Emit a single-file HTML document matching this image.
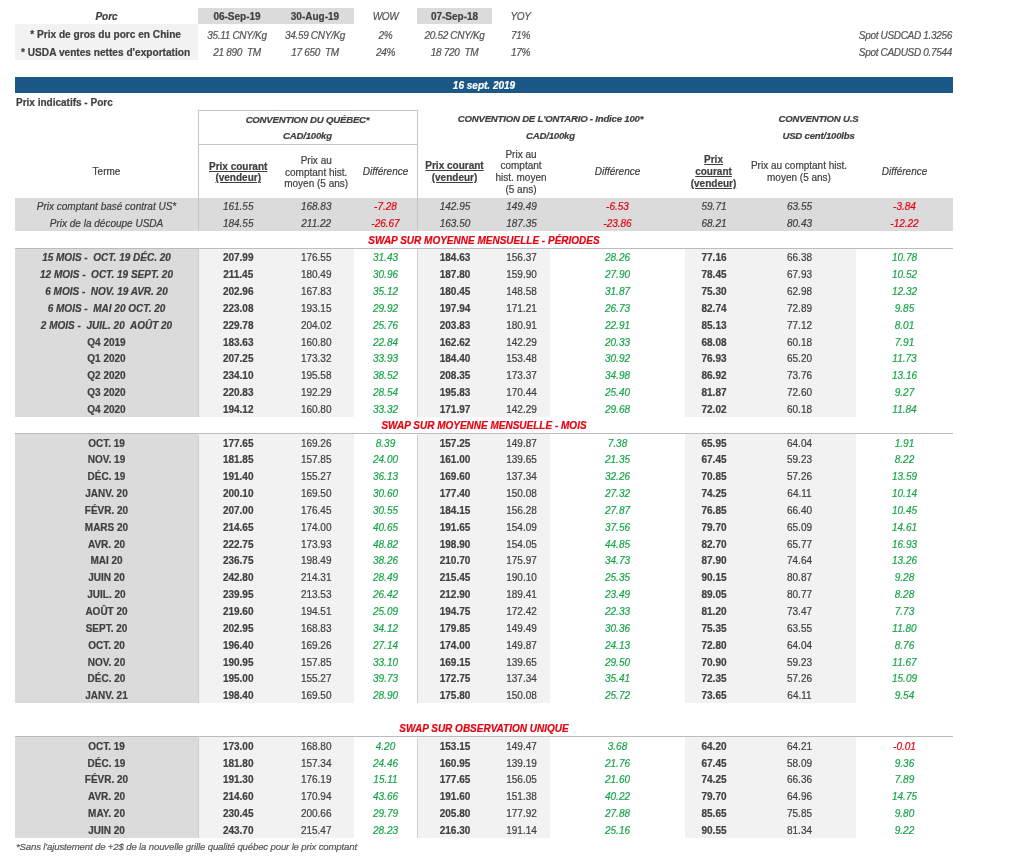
<!DOCTYPE html>
<html><head><meta charset="utf-8"><style>
html,body{margin:0;padding:0;background:#fff;width:1024px;height:857px;overflow:hidden}
body{position:relative;-webkit-text-stroke:0.2px;font-family:"Liberation Sans",sans-serif;color:#404040;font-size:10.0px}
.r,.vd,.hd,.t,.m{position:absolute}
.vd{width:0}
.hd{height:0}
.t{height:20px;line-height:20px;white-space:nowrap}
.m{text-align:center;white-space:nowrap}
.b{font-weight:bold}
.i{font-style:italic}
.bi{font-weight:bold;font-style:italic}
.u{text-decoration:underline}
</style></head><body><div style="position:absolute;left:0;top:0;width:1024px;height:857px;will-change:transform">
<div class="r" style="left:198px;top:7.60px;width:156px;height:16.60px;background:#dbdbdb"></div>
<div class="r" style="left:417px;top:7.60px;width:75px;height:16.60px;background:#dbdbdb"></div>
<div class="r" style="left:15px;top:24.20px;width:183px;height:35.50px;background:#f2f2f2"></div>
<div class="t bi" style="left:15px;width:183px;top:6.80px;text-align:center;">Porc</div>
<div class="t b" style="left:198px;width:78px;top:6.90px;text-align:center;">06-Sep-19</div>
<div class="t b" style="left:276px;width:78px;top:6.90px;text-align:center;">30-Aug-19</div>
<div class="t i" style="left:354px;width:63px;top:6.80px;text-align:center;letter-spacing:-0.32px;color:#555555;font-size:10px;">WOW</div>
<div class="t b" style="left:417px;width:75px;top:6.90px;text-align:center;">07-Sep-18</div>
<div class="t i" style="left:492px;width:57px;top:6.80px;text-align:center;letter-spacing:-0.32px;color:#555555;font-size:10px;">YOY</div>
<div class="t b" style="left:13.6px;width:184.0px;top:24.70px;text-align:center;font-size:10.15px;">* Prix de gros du porc en Chine</div>
<div class="t b" style="left:13.6px;width:184.0px;top:42.50px;text-align:center;font-size:10.15px;">* USDA ventes nettes d'exportation</div>
<div class="t i" style="left:198px;width:78px;top:25.50px;text-align:center;letter-spacing:-0.32px;color:#555555;font-size:10px;">35.11 CNY/Kg</div>
<div class="t i" style="left:198px;width:78px;top:42.50px;text-align:center;letter-spacing:-0.32px;color:#555555;font-size:10px;">21 890&nbsp; TM</div>
<div class="t i" style="left:276px;width:78px;top:25.50px;text-align:center;letter-spacing:-0.32px;color:#555555;font-size:10px;">34.59 CNY/Kg</div>
<div class="t i" style="left:276px;width:78px;top:42.50px;text-align:center;letter-spacing:-0.32px;color:#555555;font-size:10px;">17 650&nbsp; TM</div>
<div class="t i" style="left:354px;width:63px;top:25.50px;text-align:center;letter-spacing:-0.32px;color:#555555;font-size:10px;">2%</div>
<div class="t i" style="left:354px;width:63px;top:42.50px;text-align:center;letter-spacing:-0.32px;color:#555555;font-size:10px;">24%</div>
<div class="t i" style="left:417px;width:75px;top:25.50px;text-align:center;letter-spacing:-0.32px;color:#555555;font-size:10px;">20.52 CNY/Kg</div>
<div class="t i" style="left:417px;width:75px;top:42.50px;text-align:center;letter-spacing:-0.32px;color:#555555;font-size:10px;">18 720&nbsp; TM</div>
<div class="t i" style="left:492px;width:57px;top:25.50px;text-align:center;letter-spacing:-0.32px;color:#555555;font-size:10px;">71%</div>
<div class="t i" style="left:492px;width:57px;top:42.50px;text-align:center;letter-spacing:-0.32px;color:#555555;font-size:10px;">17%</div>
<div class="t i" style="left:700px;width:252px;top:25.50px;text-align:right;letter-spacing:-0.32px;color:#555555;font-size:10px;">Spot USDCAD 1.3256</div>
<div class="t i" style="left:700px;width:252px;top:42.50px;text-align:right;letter-spacing:-0.32px;color:#555555;font-size:10px;">Spot CADUSD 0.7544</div>
<div class="r" style="left:15px;top:77.00px;width:938px;height:16.30px;background:#1b5787"></div>
<div class="t bi" style="left:15px;width:938px;top:76.40px;text-align:center;color:#ffffff;">16 sept. 2019</div>
<div class="t b" style="left:16px;width:384px;top:93.10px;text-align:left;">Prix indicatifs - Porc</div>
<div class="r" style="left:15px;top:197.80px;width:938px;height:33.68px;background:#dbdbdb"></div>
<div class="hd" style="left:198px;top:110.20px;width:219px;border-top:1px solid #c4c4c4"></div>
<div class="hd" style="left:198px;top:143.70px;width:219px;border-top:1px solid #c4c4c4"></div>
<div class="r" style="left:276px;top:110.20px;width:78px;height:1.00px;background:#bdbdbd"></div>
<div class="r" style="left:276px;top:143.70px;width:78px;height:1.60px;background:#c4c4c4"></div>
<div class="vd" style="left:198px;top:110.20px;height:121.10px;border-left:1px solid #c4c4c4"></div>
<div class="vd" style="left:417px;top:110.20px;height:121.10px;border-left:1px solid #c4c4c4"></div>
<div class="t bi" style="left:198px;width:219px;top:109.80px;text-align:center;letter-spacing:-0.2px;font-size:9.6px;">CONVENTION DU QUÉBEC*</div>
<div class="t bi" style="left:198px;width:219px;top:126.10px;text-align:center;letter-spacing:-0.2px;font-size:9.6px;">CAD/100kg</div>
<div class="t bi" style="left:417px;width:267px;top:109.40px;text-align:center;letter-spacing:-0.2px;font-size:9.6px;">CONVENTION DE L'ONTARIO - Indice 100*</div>
<div class="t bi" style="left:417px;width:267px;top:125.90px;text-align:center;letter-spacing:-0.2px;font-size:9.6px;">CAD/100kg</div>
<div class="t bi" style="left:684px;width:269px;top:109.40px;text-align:center;letter-spacing:-0.2px;font-size:9.6px;">CONVENTION U.S</div>
<div class="t bi" style="left:684px;width:269px;top:125.90px;text-align:center;letter-spacing:-0.2px;font-size:9.6px;">USD cent/100lbs</div>
<div class="t " style="left:15px;width:183px;top:162.10px;text-align:center;">Terme</div>
<div class="m b u" style="left:199.2px;width:78.0px;top:160.70px;line-height:11.7px;">Prix courant<br>(vendeur)</div>
<div class="m " style="left:277.2px;width:78.0px;top:154.85px;line-height:11.7px;">Prix au<br>comptant hist.<br>moyen (5 ans)</div>
<div class="t i" style="left:354px;width:63px;top:162.40px;text-align:center;">Différence</div>
<div class="m b u" style="left:417px;width:75px;top:160.20px;line-height:11.7px;">Prix courant<br>(vendeur)</div>
<div class="m " style="left:492px;width:58px;top:148.50px;line-height:11.7px;">Prix au<br>comptant<br>hist. moyen<br>(5 ans)</div>
<div class="t i" style="left:550px;width:135px;top:161.90px;text-align:center;">Différence</div>
<div class="m b u" style="left:685px;width:57px;top:154.35px;line-height:11.7px;">Prix<br>courant<br>(vendeur)</div>
<div class="m " style="left:742px;width:114px;top:160.20px;line-height:11.7px;">Prix au comptant hist.<br>moyen (5 ans)</div>
<div class="t i" style="left:856px;width:97px;top:161.90px;text-align:center;">Différence</div>
<div class="t i" style="left:15px;width:183px;top:197.22px;text-align:center;">Prix comptant basé contrat US*</div>
<div class="t i" style="left:199.2px;width:78.0px;top:197.22px;text-align:center;">161.55</div>
<div class="t i" style="left:277.2px;width:78.0px;top:197.22px;text-align:center;">168.83</div>
<div class="t i" style="left:354px;width:63px;top:197.22px;text-align:center;color:#e30613;">-7.28</div>
<div class="t i" style="left:417.5px;width:75.0px;top:197.22px;text-align:center;">142.95</div>
<div class="t i" style="left:492.5px;width:58.0px;top:197.22px;text-align:center;">149.49</div>
<div class="t i" style="left:550px;width:135px;top:197.22px;text-align:center;color:#e30613;">-6.53</div>
<div class="t i" style="left:685.5px;width:57.0px;top:197.22px;text-align:center;">59.71</div>
<div class="t i" style="left:742.5px;width:114.0px;top:197.22px;text-align:center;">63.55</div>
<div class="t i" style="left:856px;width:97px;top:197.22px;text-align:center;color:#e30613;">-3.84</div>
<div class="t i" style="left:15px;width:183px;top:214.06px;text-align:center;">Prix de la découpe USDA</div>
<div class="t i" style="left:199.2px;width:78.0px;top:214.06px;text-align:center;">184.55</div>
<div class="t i" style="left:277.2px;width:78.0px;top:214.06px;text-align:center;">211.22</div>
<div class="t i" style="left:354px;width:63px;top:214.06px;text-align:center;color:#e30613;">-26.67</div>
<div class="t i" style="left:417.5px;width:75.0px;top:214.06px;text-align:center;">163.50</div>
<div class="t i" style="left:492.5px;width:58.0px;top:214.06px;text-align:center;">187.35</div>
<div class="t i" style="left:550px;width:135px;top:214.06px;text-align:center;color:#e30613;">-23.86</div>
<div class="t i" style="left:685.5px;width:57.0px;top:214.06px;text-align:center;">68.21</div>
<div class="t i" style="left:742.5px;width:114.0px;top:214.06px;text-align:center;">80.43</div>
<div class="t i" style="left:856px;width:97px;top:214.06px;text-align:center;color:#e30613;">-12.22</div>
<div class="t bi" style="left:15px;width:938px;top:230.50px;text-align:center;color:#e30613;">SWAP SUR MOYENNE MENSUELLE - PÉRIODES</div>
<div class="r" style="left:15px;top:248.32px;width:183px;height:168.40px;background:#dbdbdb"></div>
<div class="r" style="left:198px;top:248.32px;width:156px;height:168.40px;background:#f2f2f2"></div>
<div class="r" style="left:417px;top:248.32px;width:133px;height:168.40px;background:#f2f2f2"></div>
<div class="r" style="left:685px;top:248.32px;width:171px;height:168.40px;background:#f2f2f2"></div>
<div class="r" style="left:15px;top:247.82px;width:938px;height:1.20px;background:#bcbcbc"></div>
<div class="vd" style="left:198px;top:249.32px;height:167.40px;border-left:1px solid #cdcdcd"></div>
<div class="vd" style="left:417px;top:249.32px;height:167.40px;border-left:1px solid #cdcdcd"></div>
<div class="t bi" style="left:15px;width:183px;top:248.34px;text-align:center;">15 MOIS -&nbsp; OCT. 19 DÉC. 20</div>
<div class="t b" style="left:199.2px;width:78.0px;top:248.34px;text-align:center;">207.99</div>
<div class="t " style="left:277.2px;width:78.0px;top:248.34px;text-align:center;">176.55</div>
<div class="t i" style="left:354px;width:63px;top:248.34px;text-align:center;color:#1aa64a;">31.43</div>
<div class="t b" style="left:417.5px;width:75.0px;top:248.34px;text-align:center;">184.63</div>
<div class="t " style="left:492.5px;width:58.0px;top:248.34px;text-align:center;">156.37</div>
<div class="t i" style="left:550px;width:135px;top:248.34px;text-align:center;color:#1aa64a;">28.26</div>
<div class="t b" style="left:685.5px;width:57.0px;top:248.34px;text-align:center;">77.16</div>
<div class="t " style="left:742.5px;width:114.0px;top:248.34px;text-align:center;">66.38</div>
<div class="t i" style="left:856px;width:97px;top:248.34px;text-align:center;color:#1aa64a;">10.78</div>
<div class="t bi" style="left:15px;width:183px;top:265.18px;text-align:center;">12 MOIS -&nbsp; OCT. 19 SEPT. 20</div>
<div class="t b" style="left:199.2px;width:78.0px;top:265.18px;text-align:center;">211.45</div>
<div class="t " style="left:277.2px;width:78.0px;top:265.18px;text-align:center;">180.49</div>
<div class="t i" style="left:354px;width:63px;top:265.18px;text-align:center;color:#1aa64a;">30.96</div>
<div class="t b" style="left:417.5px;width:75.0px;top:265.18px;text-align:center;">187.80</div>
<div class="t " style="left:492.5px;width:58.0px;top:265.18px;text-align:center;">159.90</div>
<div class="t i" style="left:550px;width:135px;top:265.18px;text-align:center;color:#1aa64a;">27.90</div>
<div class="t b" style="left:685.5px;width:57.0px;top:265.18px;text-align:center;">78.45</div>
<div class="t " style="left:742.5px;width:114.0px;top:265.18px;text-align:center;">67.93</div>
<div class="t i" style="left:856px;width:97px;top:265.18px;text-align:center;color:#1aa64a;">10.52</div>
<div class="t bi" style="left:15px;width:183px;top:282.02px;text-align:center;">6 MOIS -&nbsp; NOV. 19 AVR. 20</div>
<div class="t b" style="left:199.2px;width:78.0px;top:282.02px;text-align:center;">202.96</div>
<div class="t " style="left:277.2px;width:78.0px;top:282.02px;text-align:center;">167.83</div>
<div class="t i" style="left:354px;width:63px;top:282.02px;text-align:center;color:#1aa64a;">35.12</div>
<div class="t b" style="left:417.5px;width:75.0px;top:282.02px;text-align:center;">180.45</div>
<div class="t " style="left:492.5px;width:58.0px;top:282.02px;text-align:center;">148.58</div>
<div class="t i" style="left:550px;width:135px;top:282.02px;text-align:center;color:#1aa64a;">31.87</div>
<div class="t b" style="left:685.5px;width:57.0px;top:282.02px;text-align:center;">75.30</div>
<div class="t " style="left:742.5px;width:114.0px;top:282.02px;text-align:center;">62.98</div>
<div class="t i" style="left:856px;width:97px;top:282.02px;text-align:center;color:#1aa64a;">12.32</div>
<div class="t bi" style="left:15px;width:183px;top:298.86px;text-align:center;">6 MOIS -&nbsp; MAI 20 OCT. 20</div>
<div class="t b" style="left:199.2px;width:78.0px;top:298.86px;text-align:center;">223.08</div>
<div class="t " style="left:277.2px;width:78.0px;top:298.86px;text-align:center;">193.15</div>
<div class="t i" style="left:354px;width:63px;top:298.86px;text-align:center;color:#1aa64a;">29.92</div>
<div class="t b" style="left:417.5px;width:75.0px;top:298.86px;text-align:center;">197.94</div>
<div class="t " style="left:492.5px;width:58.0px;top:298.86px;text-align:center;">171.21</div>
<div class="t i" style="left:550px;width:135px;top:298.86px;text-align:center;color:#1aa64a;">26.73</div>
<div class="t b" style="left:685.5px;width:57.0px;top:298.86px;text-align:center;">82.74</div>
<div class="t " style="left:742.5px;width:114.0px;top:298.86px;text-align:center;">72.89</div>
<div class="t i" style="left:856px;width:97px;top:298.86px;text-align:center;color:#1aa64a;">9.85</div>
<div class="t bi" style="left:15px;width:183px;top:315.70px;text-align:center;">2 MOIS -&nbsp; JUIL. 20&nbsp; AOÛT 20</div>
<div class="t b" style="left:199.2px;width:78.0px;top:315.70px;text-align:center;">229.78</div>
<div class="t " style="left:277.2px;width:78.0px;top:315.70px;text-align:center;">204.02</div>
<div class="t i" style="left:354px;width:63px;top:315.70px;text-align:center;color:#1aa64a;">25.76</div>
<div class="t b" style="left:417.5px;width:75.0px;top:315.70px;text-align:center;">203.83</div>
<div class="t " style="left:492.5px;width:58.0px;top:315.70px;text-align:center;">180.91</div>
<div class="t i" style="left:550px;width:135px;top:315.70px;text-align:center;color:#1aa64a;">22.91</div>
<div class="t b" style="left:685.5px;width:57.0px;top:315.70px;text-align:center;">85.13</div>
<div class="t " style="left:742.5px;width:114.0px;top:315.70px;text-align:center;">77.12</div>
<div class="t i" style="left:856px;width:97px;top:315.70px;text-align:center;color:#1aa64a;">8.01</div>
<div class="t b" style="left:15px;width:183px;top:332.54px;text-align:center;">Q4 2019</div>
<div class="t b" style="left:199.2px;width:78.0px;top:332.54px;text-align:center;">183.63</div>
<div class="t " style="left:277.2px;width:78.0px;top:332.54px;text-align:center;">160.80</div>
<div class="t i" style="left:354px;width:63px;top:332.54px;text-align:center;color:#1aa64a;">22.84</div>
<div class="t b" style="left:417.5px;width:75.0px;top:332.54px;text-align:center;">162.62</div>
<div class="t " style="left:492.5px;width:58.0px;top:332.54px;text-align:center;">142.29</div>
<div class="t i" style="left:550px;width:135px;top:332.54px;text-align:center;color:#1aa64a;">20.33</div>
<div class="t b" style="left:685.5px;width:57.0px;top:332.54px;text-align:center;">68.08</div>
<div class="t " style="left:742.5px;width:114.0px;top:332.54px;text-align:center;">60.18</div>
<div class="t i" style="left:856px;width:97px;top:332.54px;text-align:center;color:#1aa64a;">7.91</div>
<div class="t b" style="left:15px;width:183px;top:349.38px;text-align:center;">Q1 2020</div>
<div class="t b" style="left:199.2px;width:78.0px;top:349.38px;text-align:center;">207.25</div>
<div class="t " style="left:277.2px;width:78.0px;top:349.38px;text-align:center;">173.32</div>
<div class="t i" style="left:354px;width:63px;top:349.38px;text-align:center;color:#1aa64a;">33.93</div>
<div class="t b" style="left:417.5px;width:75.0px;top:349.38px;text-align:center;">184.40</div>
<div class="t " style="left:492.5px;width:58.0px;top:349.38px;text-align:center;">153.48</div>
<div class="t i" style="left:550px;width:135px;top:349.38px;text-align:center;color:#1aa64a;">30.92</div>
<div class="t b" style="left:685.5px;width:57.0px;top:349.38px;text-align:center;">76.93</div>
<div class="t " style="left:742.5px;width:114.0px;top:349.38px;text-align:center;">65.20</div>
<div class="t i" style="left:856px;width:97px;top:349.38px;text-align:center;color:#1aa64a;">11.73</div>
<div class="t b" style="left:15px;width:183px;top:366.22px;text-align:center;">Q2 2020</div>
<div class="t b" style="left:199.2px;width:78.0px;top:366.22px;text-align:center;">234.10</div>
<div class="t " style="left:277.2px;width:78.0px;top:366.22px;text-align:center;">195.58</div>
<div class="t i" style="left:354px;width:63px;top:366.22px;text-align:center;color:#1aa64a;">38.52</div>
<div class="t b" style="left:417.5px;width:75.0px;top:366.22px;text-align:center;">208.35</div>
<div class="t " style="left:492.5px;width:58.0px;top:366.22px;text-align:center;">173.37</div>
<div class="t i" style="left:550px;width:135px;top:366.22px;text-align:center;color:#1aa64a;">34.98</div>
<div class="t b" style="left:685.5px;width:57.0px;top:366.22px;text-align:center;">86.92</div>
<div class="t " style="left:742.5px;width:114.0px;top:366.22px;text-align:center;">73.76</div>
<div class="t i" style="left:856px;width:97px;top:366.22px;text-align:center;color:#1aa64a;">13.16</div>
<div class="t b" style="left:15px;width:183px;top:383.06px;text-align:center;">Q3 2020</div>
<div class="t b" style="left:199.2px;width:78.0px;top:383.06px;text-align:center;">220.83</div>
<div class="t " style="left:277.2px;width:78.0px;top:383.06px;text-align:center;">192.29</div>
<div class="t i" style="left:354px;width:63px;top:383.06px;text-align:center;color:#1aa64a;">28.54</div>
<div class="t b" style="left:417.5px;width:75.0px;top:383.06px;text-align:center;">195.83</div>
<div class="t " style="left:492.5px;width:58.0px;top:383.06px;text-align:center;">170.44</div>
<div class="t i" style="left:550px;width:135px;top:383.06px;text-align:center;color:#1aa64a;">25.40</div>
<div class="t b" style="left:685.5px;width:57.0px;top:383.06px;text-align:center;">81.87</div>
<div class="t " style="left:742.5px;width:114.0px;top:383.06px;text-align:center;">72.60</div>
<div class="t i" style="left:856px;width:97px;top:383.06px;text-align:center;color:#1aa64a;">9.27</div>
<div class="t b" style="left:15px;width:183px;top:399.90px;text-align:center;">Q4 2020</div>
<div class="t b" style="left:199.2px;width:78.0px;top:399.90px;text-align:center;">194.12</div>
<div class="t " style="left:277.2px;width:78.0px;top:399.90px;text-align:center;">160.80</div>
<div class="t i" style="left:354px;width:63px;top:399.90px;text-align:center;color:#1aa64a;">33.32</div>
<div class="t b" style="left:417.5px;width:75.0px;top:399.90px;text-align:center;">171.97</div>
<div class="t " style="left:492.5px;width:58.0px;top:399.90px;text-align:center;">142.29</div>
<div class="t i" style="left:550px;width:135px;top:399.90px;text-align:center;color:#1aa64a;">29.68</div>
<div class="t b" style="left:685.5px;width:57.0px;top:399.90px;text-align:center;">72.02</div>
<div class="t " style="left:742.5px;width:114.0px;top:399.90px;text-align:center;">60.18</div>
<div class="t i" style="left:856px;width:97px;top:399.90px;text-align:center;color:#1aa64a;">11.84</div>
<div class="t bi" style="left:15px;width:938px;top:415.74px;text-align:center;color:#e30613;">SWAP SUR MOYENNE MENSUELLE - MOIS</div>
<div class="r" style="left:15px;top:433.56px;width:183px;height:269.44px;background:#dbdbdb"></div>
<div class="r" style="left:198px;top:433.56px;width:156px;height:269.44px;background:#f2f2f2"></div>
<div class="r" style="left:417px;top:433.56px;width:133px;height:269.44px;background:#f2f2f2"></div>
<div class="r" style="left:685px;top:433.56px;width:171px;height:269.44px;background:#f2f2f2"></div>
<div class="r" style="left:15px;top:433.06px;width:938px;height:1.20px;background:#bcbcbc"></div>
<div class="vd" style="left:198px;top:434.56px;height:268.44px;border-left:1px solid #cdcdcd"></div>
<div class="vd" style="left:417px;top:434.56px;height:268.44px;border-left:1px solid #cdcdcd"></div>
<div class="t b" style="left:15px;width:183px;top:433.58px;text-align:center;">OCT. 19</div>
<div class="t b" style="left:199.2px;width:78.0px;top:433.58px;text-align:center;">177.65</div>
<div class="t " style="left:277.2px;width:78.0px;top:433.58px;text-align:center;">169.26</div>
<div class="t i" style="left:354px;width:63px;top:433.58px;text-align:center;color:#1aa64a;">8.39</div>
<div class="t b" style="left:417.5px;width:75.0px;top:433.58px;text-align:center;">157.25</div>
<div class="t " style="left:492.5px;width:58.0px;top:433.58px;text-align:center;">149.87</div>
<div class="t i" style="left:550px;width:135px;top:433.58px;text-align:center;color:#1aa64a;">7.38</div>
<div class="t b" style="left:685.5px;width:57.0px;top:433.58px;text-align:center;">65.95</div>
<div class="t " style="left:742.5px;width:114.0px;top:433.58px;text-align:center;">64.04</div>
<div class="t i" style="left:856px;width:97px;top:433.58px;text-align:center;color:#1aa64a;">1.91</div>
<div class="t b" style="left:15px;width:183px;top:450.42px;text-align:center;">NOV. 19</div>
<div class="t b" style="left:199.2px;width:78.0px;top:450.42px;text-align:center;">181.85</div>
<div class="t " style="left:277.2px;width:78.0px;top:450.42px;text-align:center;">157.85</div>
<div class="t i" style="left:354px;width:63px;top:450.42px;text-align:center;color:#1aa64a;">24.00</div>
<div class="t b" style="left:417.5px;width:75.0px;top:450.42px;text-align:center;">161.00</div>
<div class="t " style="left:492.5px;width:58.0px;top:450.42px;text-align:center;">139.65</div>
<div class="t i" style="left:550px;width:135px;top:450.42px;text-align:center;color:#1aa64a;">21.35</div>
<div class="t b" style="left:685.5px;width:57.0px;top:450.42px;text-align:center;">67.45</div>
<div class="t " style="left:742.5px;width:114.0px;top:450.42px;text-align:center;">59.23</div>
<div class="t i" style="left:856px;width:97px;top:450.42px;text-align:center;color:#1aa64a;">8.22</div>
<div class="t b" style="left:15px;width:183px;top:467.26px;text-align:center;">DÉC. 19</div>
<div class="t b" style="left:199.2px;width:78.0px;top:467.26px;text-align:center;">191.40</div>
<div class="t " style="left:277.2px;width:78.0px;top:467.26px;text-align:center;">155.27</div>
<div class="t i" style="left:354px;width:63px;top:467.26px;text-align:center;color:#1aa64a;">36.13</div>
<div class="t b" style="left:417.5px;width:75.0px;top:467.26px;text-align:center;">169.60</div>
<div class="t " style="left:492.5px;width:58.0px;top:467.26px;text-align:center;">137.34</div>
<div class="t i" style="left:550px;width:135px;top:467.26px;text-align:center;color:#1aa64a;">32.26</div>
<div class="t b" style="left:685.5px;width:57.0px;top:467.26px;text-align:center;">70.85</div>
<div class="t " style="left:742.5px;width:114.0px;top:467.26px;text-align:center;">57.26</div>
<div class="t i" style="left:856px;width:97px;top:467.26px;text-align:center;color:#1aa64a;">13.59</div>
<div class="t b" style="left:15px;width:183px;top:484.10px;text-align:center;">JANV. 20</div>
<div class="t b" style="left:199.2px;width:78.0px;top:484.10px;text-align:center;">200.10</div>
<div class="t " style="left:277.2px;width:78.0px;top:484.10px;text-align:center;">169.50</div>
<div class="t i" style="left:354px;width:63px;top:484.10px;text-align:center;color:#1aa64a;">30.60</div>
<div class="t b" style="left:417.5px;width:75.0px;top:484.10px;text-align:center;">177.40</div>
<div class="t " style="left:492.5px;width:58.0px;top:484.10px;text-align:center;">150.08</div>
<div class="t i" style="left:550px;width:135px;top:484.10px;text-align:center;color:#1aa64a;">27.32</div>
<div class="t b" style="left:685.5px;width:57.0px;top:484.10px;text-align:center;">74.25</div>
<div class="t " style="left:742.5px;width:114.0px;top:484.10px;text-align:center;">64.11</div>
<div class="t i" style="left:856px;width:97px;top:484.10px;text-align:center;color:#1aa64a;">10.14</div>
<div class="t b" style="left:15px;width:183px;top:500.94px;text-align:center;">FÉVR. 20</div>
<div class="t b" style="left:199.2px;width:78.0px;top:500.94px;text-align:center;">207.00</div>
<div class="t " style="left:277.2px;width:78.0px;top:500.94px;text-align:center;">176.45</div>
<div class="t i" style="left:354px;width:63px;top:500.94px;text-align:center;color:#1aa64a;">30.55</div>
<div class="t b" style="left:417.5px;width:75.0px;top:500.94px;text-align:center;">184.15</div>
<div class="t " style="left:492.5px;width:58.0px;top:500.94px;text-align:center;">156.28</div>
<div class="t i" style="left:550px;width:135px;top:500.94px;text-align:center;color:#1aa64a;">27.87</div>
<div class="t b" style="left:685.5px;width:57.0px;top:500.94px;text-align:center;">76.85</div>
<div class="t " style="left:742.5px;width:114.0px;top:500.94px;text-align:center;">66.40</div>
<div class="t i" style="left:856px;width:97px;top:500.94px;text-align:center;color:#1aa64a;">10.45</div>
<div class="t b" style="left:15px;width:183px;top:517.78px;text-align:center;">MARS 20</div>
<div class="t b" style="left:199.2px;width:78.0px;top:517.78px;text-align:center;">214.65</div>
<div class="t " style="left:277.2px;width:78.0px;top:517.78px;text-align:center;">174.00</div>
<div class="t i" style="left:354px;width:63px;top:517.78px;text-align:center;color:#1aa64a;">40.65</div>
<div class="t b" style="left:417.5px;width:75.0px;top:517.78px;text-align:center;">191.65</div>
<div class="t " style="left:492.5px;width:58.0px;top:517.78px;text-align:center;">154.09</div>
<div class="t i" style="left:550px;width:135px;top:517.78px;text-align:center;color:#1aa64a;">37.56</div>
<div class="t b" style="left:685.5px;width:57.0px;top:517.78px;text-align:center;">79.70</div>
<div class="t " style="left:742.5px;width:114.0px;top:517.78px;text-align:center;">65.09</div>
<div class="t i" style="left:856px;width:97px;top:517.78px;text-align:center;color:#1aa64a;">14.61</div>
<div class="t b" style="left:15px;width:183px;top:534.62px;text-align:center;">AVR. 20</div>
<div class="t b" style="left:199.2px;width:78.0px;top:534.62px;text-align:center;">222.75</div>
<div class="t " style="left:277.2px;width:78.0px;top:534.62px;text-align:center;">173.93</div>
<div class="t i" style="left:354px;width:63px;top:534.62px;text-align:center;color:#1aa64a;">48.82</div>
<div class="t b" style="left:417.5px;width:75.0px;top:534.62px;text-align:center;">198.90</div>
<div class="t " style="left:492.5px;width:58.0px;top:534.62px;text-align:center;">154.05</div>
<div class="t i" style="left:550px;width:135px;top:534.62px;text-align:center;color:#1aa64a;">44.85</div>
<div class="t b" style="left:685.5px;width:57.0px;top:534.62px;text-align:center;">82.70</div>
<div class="t " style="left:742.5px;width:114.0px;top:534.62px;text-align:center;">65.77</div>
<div class="t i" style="left:856px;width:97px;top:534.62px;text-align:center;color:#1aa64a;">16.93</div>
<div class="t b" style="left:15px;width:183px;top:551.46px;text-align:center;">MAI 20</div>
<div class="t b" style="left:199.2px;width:78.0px;top:551.46px;text-align:center;">236.75</div>
<div class="t " style="left:277.2px;width:78.0px;top:551.46px;text-align:center;">198.49</div>
<div class="t i" style="left:354px;width:63px;top:551.46px;text-align:center;color:#1aa64a;">38.26</div>
<div class="t b" style="left:417.5px;width:75.0px;top:551.46px;text-align:center;">210.70</div>
<div class="t " style="left:492.5px;width:58.0px;top:551.46px;text-align:center;">175.97</div>
<div class="t i" style="left:550px;width:135px;top:551.46px;text-align:center;color:#1aa64a;">34.73</div>
<div class="t b" style="left:685.5px;width:57.0px;top:551.46px;text-align:center;">87.90</div>
<div class="t " style="left:742.5px;width:114.0px;top:551.46px;text-align:center;">74.64</div>
<div class="t i" style="left:856px;width:97px;top:551.46px;text-align:center;color:#1aa64a;">13.26</div>
<div class="t b" style="left:15px;width:183px;top:568.30px;text-align:center;">JUIN 20</div>
<div class="t b" style="left:199.2px;width:78.0px;top:568.30px;text-align:center;">242.80</div>
<div class="t " style="left:277.2px;width:78.0px;top:568.30px;text-align:center;">214.31</div>
<div class="t i" style="left:354px;width:63px;top:568.30px;text-align:center;color:#1aa64a;">28.49</div>
<div class="t b" style="left:417.5px;width:75.0px;top:568.30px;text-align:center;">215.45</div>
<div class="t " style="left:492.5px;width:58.0px;top:568.30px;text-align:center;">190.10</div>
<div class="t i" style="left:550px;width:135px;top:568.30px;text-align:center;color:#1aa64a;">25.35</div>
<div class="t b" style="left:685.5px;width:57.0px;top:568.30px;text-align:center;">90.15</div>
<div class="t " style="left:742.5px;width:114.0px;top:568.30px;text-align:center;">80.87</div>
<div class="t i" style="left:856px;width:97px;top:568.30px;text-align:center;color:#1aa64a;">9.28</div>
<div class="t b" style="left:15px;width:183px;top:585.14px;text-align:center;">JUIL. 20</div>
<div class="t b" style="left:199.2px;width:78.0px;top:585.14px;text-align:center;">239.95</div>
<div class="t " style="left:277.2px;width:78.0px;top:585.14px;text-align:center;">213.53</div>
<div class="t i" style="left:354px;width:63px;top:585.14px;text-align:center;color:#1aa64a;">26.42</div>
<div class="t b" style="left:417.5px;width:75.0px;top:585.14px;text-align:center;">212.90</div>
<div class="t " style="left:492.5px;width:58.0px;top:585.14px;text-align:center;">189.41</div>
<div class="t i" style="left:550px;width:135px;top:585.14px;text-align:center;color:#1aa64a;">23.49</div>
<div class="t b" style="left:685.5px;width:57.0px;top:585.14px;text-align:center;">89.05</div>
<div class="t " style="left:742.5px;width:114.0px;top:585.14px;text-align:center;">80.77</div>
<div class="t i" style="left:856px;width:97px;top:585.14px;text-align:center;color:#1aa64a;">8.28</div>
<div class="t b" style="left:15px;width:183px;top:601.98px;text-align:center;">AOÛT 20</div>
<div class="t b" style="left:199.2px;width:78.0px;top:601.98px;text-align:center;">219.60</div>
<div class="t " style="left:277.2px;width:78.0px;top:601.98px;text-align:center;">194.51</div>
<div class="t i" style="left:354px;width:63px;top:601.98px;text-align:center;color:#1aa64a;">25.09</div>
<div class="t b" style="left:417.5px;width:75.0px;top:601.98px;text-align:center;">194.75</div>
<div class="t " style="left:492.5px;width:58.0px;top:601.98px;text-align:center;">172.42</div>
<div class="t i" style="left:550px;width:135px;top:601.98px;text-align:center;color:#1aa64a;">22.33</div>
<div class="t b" style="left:685.5px;width:57.0px;top:601.98px;text-align:center;">81.20</div>
<div class="t " style="left:742.5px;width:114.0px;top:601.98px;text-align:center;">73.47</div>
<div class="t i" style="left:856px;width:97px;top:601.98px;text-align:center;color:#1aa64a;">7.73</div>
<div class="t b" style="left:15px;width:183px;top:618.82px;text-align:center;">SEPT. 20</div>
<div class="t b" style="left:199.2px;width:78.0px;top:618.82px;text-align:center;">202.95</div>
<div class="t " style="left:277.2px;width:78.0px;top:618.82px;text-align:center;">168.83</div>
<div class="t i" style="left:354px;width:63px;top:618.82px;text-align:center;color:#1aa64a;">34.12</div>
<div class="t b" style="left:417.5px;width:75.0px;top:618.82px;text-align:center;">179.85</div>
<div class="t " style="left:492.5px;width:58.0px;top:618.82px;text-align:center;">149.49</div>
<div class="t i" style="left:550px;width:135px;top:618.82px;text-align:center;color:#1aa64a;">30.36</div>
<div class="t b" style="left:685.5px;width:57.0px;top:618.82px;text-align:center;">75.35</div>
<div class="t " style="left:742.5px;width:114.0px;top:618.82px;text-align:center;">63.55</div>
<div class="t i" style="left:856px;width:97px;top:618.82px;text-align:center;color:#1aa64a;">11.80</div>
<div class="t b" style="left:15px;width:183px;top:635.66px;text-align:center;">OCT. 20</div>
<div class="t b" style="left:199.2px;width:78.0px;top:635.66px;text-align:center;">196.40</div>
<div class="t " style="left:277.2px;width:78.0px;top:635.66px;text-align:center;">169.26</div>
<div class="t i" style="left:354px;width:63px;top:635.66px;text-align:center;color:#1aa64a;">27.14</div>
<div class="t b" style="left:417.5px;width:75.0px;top:635.66px;text-align:center;">174.00</div>
<div class="t " style="left:492.5px;width:58.0px;top:635.66px;text-align:center;">149.87</div>
<div class="t i" style="left:550px;width:135px;top:635.66px;text-align:center;color:#1aa64a;">24.13</div>
<div class="t b" style="left:685.5px;width:57.0px;top:635.66px;text-align:center;">72.80</div>
<div class="t " style="left:742.5px;width:114.0px;top:635.66px;text-align:center;">64.04</div>
<div class="t i" style="left:856px;width:97px;top:635.66px;text-align:center;color:#1aa64a;">8.76</div>
<div class="t b" style="left:15px;width:183px;top:652.50px;text-align:center;">NOV. 20</div>
<div class="t b" style="left:199.2px;width:78.0px;top:652.50px;text-align:center;">190.95</div>
<div class="t " style="left:277.2px;width:78.0px;top:652.50px;text-align:center;">157.85</div>
<div class="t i" style="left:354px;width:63px;top:652.50px;text-align:center;color:#1aa64a;">33.10</div>
<div class="t b" style="left:417.5px;width:75.0px;top:652.50px;text-align:center;">169.15</div>
<div class="t " style="left:492.5px;width:58.0px;top:652.50px;text-align:center;">139.65</div>
<div class="t i" style="left:550px;width:135px;top:652.50px;text-align:center;color:#1aa64a;">29.50</div>
<div class="t b" style="left:685.5px;width:57.0px;top:652.50px;text-align:center;">70.90</div>
<div class="t " style="left:742.5px;width:114.0px;top:652.50px;text-align:center;">59.23</div>
<div class="t i" style="left:856px;width:97px;top:652.50px;text-align:center;color:#1aa64a;">11.67</div>
<div class="t b" style="left:15px;width:183px;top:669.34px;text-align:center;">DÉC. 20</div>
<div class="t b" style="left:199.2px;width:78.0px;top:669.34px;text-align:center;">195.00</div>
<div class="t " style="left:277.2px;width:78.0px;top:669.34px;text-align:center;">155.27</div>
<div class="t i" style="left:354px;width:63px;top:669.34px;text-align:center;color:#1aa64a;">39.73</div>
<div class="t b" style="left:417.5px;width:75.0px;top:669.34px;text-align:center;">172.75</div>
<div class="t " style="left:492.5px;width:58.0px;top:669.34px;text-align:center;">137.34</div>
<div class="t i" style="left:550px;width:135px;top:669.34px;text-align:center;color:#1aa64a;">35.41</div>
<div class="t b" style="left:685.5px;width:57.0px;top:669.34px;text-align:center;">72.35</div>
<div class="t " style="left:742.5px;width:114.0px;top:669.34px;text-align:center;">57.26</div>
<div class="t i" style="left:856px;width:97px;top:669.34px;text-align:center;color:#1aa64a;">15.09</div>
<div class="t b" style="left:15px;width:183px;top:686.18px;text-align:center;">JANV. 21</div>
<div class="t b" style="left:199.2px;width:78.0px;top:686.18px;text-align:center;">198.40</div>
<div class="t " style="left:277.2px;width:78.0px;top:686.18px;text-align:center;">169.50</div>
<div class="t i" style="left:354px;width:63px;top:686.18px;text-align:center;color:#1aa64a;">28.90</div>
<div class="t b" style="left:417.5px;width:75.0px;top:686.18px;text-align:center;">175.80</div>
<div class="t " style="left:492.5px;width:58.0px;top:686.18px;text-align:center;">150.08</div>
<div class="t i" style="left:550px;width:135px;top:686.18px;text-align:center;color:#1aa64a;">25.72</div>
<div class="t b" style="left:685.5px;width:57.0px;top:686.18px;text-align:center;">73.65</div>
<div class="t " style="left:742.5px;width:114.0px;top:686.18px;text-align:center;">64.11</div>
<div class="t i" style="left:856px;width:97px;top:686.18px;text-align:center;color:#1aa64a;">9.54</div>
<div class="t bi" style="left:15px;width:938px;top:718.86px;text-align:center;color:#e30613;">SWAP SUR OBSERVATION UNIQUE</div>
<div class="r" style="left:15px;top:736.68px;width:183px;height:101.04px;background:#dbdbdb"></div>
<div class="r" style="left:198px;top:736.68px;width:156px;height:101.04px;background:#f2f2f2"></div>
<div class="r" style="left:417px;top:736.68px;width:133px;height:101.04px;background:#f2f2f2"></div>
<div class="r" style="left:685px;top:736.68px;width:171px;height:101.04px;background:#f2f2f2"></div>
<div class="r" style="left:15px;top:736.18px;width:938px;height:1.20px;background:#bcbcbc"></div>
<div class="vd" style="left:198px;top:737.68px;height:100.04px;border-left:1px solid #cdcdcd"></div>
<div class="vd" style="left:417px;top:737.68px;height:100.04px;border-left:1px solid #cdcdcd"></div>
<div class="t b" style="left:15px;width:183px;top:736.70px;text-align:center;">OCT. 19</div>
<div class="t b" style="left:199.2px;width:78.0px;top:736.70px;text-align:center;">173.00</div>
<div class="t " style="left:277.2px;width:78.0px;top:736.70px;text-align:center;">168.80</div>
<div class="t i" style="left:354px;width:63px;top:736.70px;text-align:center;color:#1aa64a;">4.20</div>
<div class="t b" style="left:417.5px;width:75.0px;top:736.70px;text-align:center;">153.15</div>
<div class="t " style="left:492.5px;width:58.0px;top:736.70px;text-align:center;">149.47</div>
<div class="t i" style="left:550px;width:135px;top:736.70px;text-align:center;color:#1aa64a;">3.68</div>
<div class="t b" style="left:685.5px;width:57.0px;top:736.70px;text-align:center;">64.20</div>
<div class="t " style="left:742.5px;width:114.0px;top:736.70px;text-align:center;">64.21</div>
<div class="t i" style="left:856px;width:97px;top:736.70px;text-align:center;color:#e30613;">-0.01</div>
<div class="t b" style="left:15px;width:183px;top:753.54px;text-align:center;">DÉC. 19</div>
<div class="t b" style="left:199.2px;width:78.0px;top:753.54px;text-align:center;">181.80</div>
<div class="t " style="left:277.2px;width:78.0px;top:753.54px;text-align:center;">157.34</div>
<div class="t i" style="left:354px;width:63px;top:753.54px;text-align:center;color:#1aa64a;">24.46</div>
<div class="t b" style="left:417.5px;width:75.0px;top:753.54px;text-align:center;">160.95</div>
<div class="t " style="left:492.5px;width:58.0px;top:753.54px;text-align:center;">139.19</div>
<div class="t i" style="left:550px;width:135px;top:753.54px;text-align:center;color:#1aa64a;">21.76</div>
<div class="t b" style="left:685.5px;width:57.0px;top:753.54px;text-align:center;">67.45</div>
<div class="t " style="left:742.5px;width:114.0px;top:753.54px;text-align:center;">58.09</div>
<div class="t i" style="left:856px;width:97px;top:753.54px;text-align:center;color:#1aa64a;">9.36</div>
<div class="t b" style="left:15px;width:183px;top:770.38px;text-align:center;">FÉVR. 20</div>
<div class="t b" style="left:199.2px;width:78.0px;top:770.38px;text-align:center;">191.30</div>
<div class="t " style="left:277.2px;width:78.0px;top:770.38px;text-align:center;">176.19</div>
<div class="t i" style="left:354px;width:63px;top:770.38px;text-align:center;color:#1aa64a;">15.11</div>
<div class="t b" style="left:417.5px;width:75.0px;top:770.38px;text-align:center;">177.65</div>
<div class="t " style="left:492.5px;width:58.0px;top:770.38px;text-align:center;">156.05</div>
<div class="t i" style="left:550px;width:135px;top:770.38px;text-align:center;color:#1aa64a;">21.60</div>
<div class="t b" style="left:685.5px;width:57.0px;top:770.38px;text-align:center;">74.25</div>
<div class="t " style="left:742.5px;width:114.0px;top:770.38px;text-align:center;">66.36</div>
<div class="t i" style="left:856px;width:97px;top:770.38px;text-align:center;color:#1aa64a;">7.89</div>
<div class="t b" style="left:15px;width:183px;top:787.22px;text-align:center;">AVR. 20</div>
<div class="t b" style="left:199.2px;width:78.0px;top:787.22px;text-align:center;">214.60</div>
<div class="t " style="left:277.2px;width:78.0px;top:787.22px;text-align:center;">170.94</div>
<div class="t i" style="left:354px;width:63px;top:787.22px;text-align:center;color:#1aa64a;">43.66</div>
<div class="t b" style="left:417.5px;width:75.0px;top:787.22px;text-align:center;">191.60</div>
<div class="t " style="left:492.5px;width:58.0px;top:787.22px;text-align:center;">151.38</div>
<div class="t i" style="left:550px;width:135px;top:787.22px;text-align:center;color:#1aa64a;">40.22</div>
<div class="t b" style="left:685.5px;width:57.0px;top:787.22px;text-align:center;">79.70</div>
<div class="t " style="left:742.5px;width:114.0px;top:787.22px;text-align:center;">64.96</div>
<div class="t i" style="left:856px;width:97px;top:787.22px;text-align:center;color:#1aa64a;">14.75</div>
<div class="t b" style="left:15px;width:183px;top:804.06px;text-align:center;">MAY. 20</div>
<div class="t b" style="left:199.2px;width:78.0px;top:804.06px;text-align:center;">230.45</div>
<div class="t " style="left:277.2px;width:78.0px;top:804.06px;text-align:center;">200.66</div>
<div class="t i" style="left:354px;width:63px;top:804.06px;text-align:center;color:#1aa64a;">29.79</div>
<div class="t b" style="left:417.5px;width:75.0px;top:804.06px;text-align:center;">205.80</div>
<div class="t " style="left:492.5px;width:58.0px;top:804.06px;text-align:center;">177.92</div>
<div class="t i" style="left:550px;width:135px;top:804.06px;text-align:center;color:#1aa64a;">27.88</div>
<div class="t b" style="left:685.5px;width:57.0px;top:804.06px;text-align:center;">85.65</div>
<div class="t " style="left:742.5px;width:114.0px;top:804.06px;text-align:center;">75.85</div>
<div class="t i" style="left:856px;width:97px;top:804.06px;text-align:center;color:#1aa64a;">9.80</div>
<div class="t b" style="left:15px;width:183px;top:820.90px;text-align:center;">JUIN 20</div>
<div class="t b" style="left:199.2px;width:78.0px;top:820.90px;text-align:center;">243.70</div>
<div class="t " style="left:277.2px;width:78.0px;top:820.90px;text-align:center;">215.47</div>
<div class="t i" style="left:354px;width:63px;top:820.90px;text-align:center;color:#1aa64a;">28.23</div>
<div class="t b" style="left:417.5px;width:75.0px;top:820.90px;text-align:center;">216.30</div>
<div class="t " style="left:492.5px;width:58.0px;top:820.90px;text-align:center;">191.14</div>
<div class="t i" style="left:550px;width:135px;top:820.90px;text-align:center;color:#1aa64a;">25.16</div>
<div class="t b" style="left:685.5px;width:57.0px;top:820.90px;text-align:center;">90.55</div>
<div class="t " style="left:742.5px;width:114.0px;top:820.90px;text-align:center;">81.34</div>
<div class="t i" style="left:856px;width:97px;top:820.90px;text-align:center;color:#1aa64a;">9.22</div>
<div class="t i" style="left:16px;width:684px;top:837.32px;text-align:left;letter-spacing:-0.15px;color:#555555;font-size:9.6px;">*Sans l'ajustement de +2$ de la nouvelle grille qualité québec pour le prix comptant</div>
</div></body></html>
